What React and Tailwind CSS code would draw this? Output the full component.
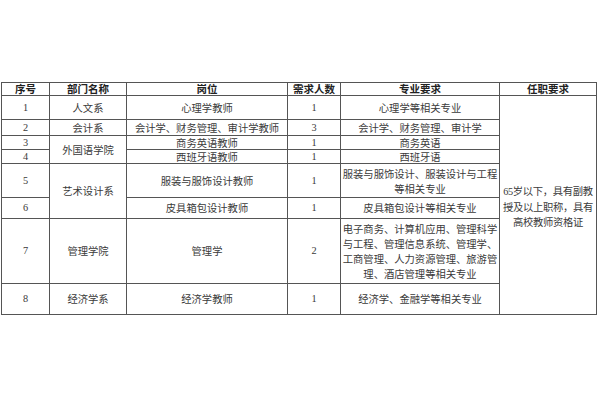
import React from "react";

const F = { fontFamily: '"Noto Sans CJK SC", "Noto Sans", sans-serif' };
const N = { fontFamily: '"Liberation Serif", "Noto Sans CJK SC", serif' };

function C({ children, className = "", num = false }) {
  return (
    <div
      className={"bg-white flex items-center justify-center text-center text-[10.3px] leading-[14px] text-[#3a3a3a] whitespace-nowrap " + className}
      style={num ? N : undefined}
    >
      {children}
    </div>
  );
}

function H({ children }) {
  return (
    <div className="bg-white flex items-center justify-center text-[10.5px] leading-[12px] font-bold text-[#222] whitespace-nowrap">
      {children}
    </div>
  );
}

export default function App() {
  return (
    <div className="w-[600px] h-[400px] bg-white relative" style={F}>
      <div className="pt-[82px] pl-[1px]">
        <div className="grid gap-px bg-[#555] p-px w-[596px]">
          <div className="grid gap-px grid-cols-[47px_76px_160px_52px_158px_96px] grid-rows-[12px_23px_15px_13px_13px_33px_20px_64px_30px]">
            <H>序号</H>
            <H>部门名称</H>
            <H>岗位</H>
            <H>需求人数</H>
            <H>专业要求</H>
            <H>任职要求</H>

            <C num>1</C>
            <C>人文系</C>
            <C>心理学教师</C>
            <C num>1</C>
            <C>心理学等相关专业</C>
            <div className="row-span-8 bg-white flex items-center justify-center text-center text-[10.3px] leading-[15px] text-[#3a3a3a] whitespace-nowrap tracking-[-0.3px]">
              <div className="pt-[2px]">
                <span style={N}>65</span>岁以下，具有副教<br />
                授及以上职称，具有<br />
                高校教师资格证
              </div>
            </div>

            <C num>2</C>
            <C>会计系</C>
            <C>会计学、财务管理、审计学教师</C>
            <C num>3</C>
            <C>会计学、财务管理、审计学</C>

            <C num>3</C>
            <C className="row-span-2">外国语学院</C>
            <C>商务英语教师</C>
            <C num>1</C>
            <C>商务英语</C>

            <C num>4</C>
            <C>西班牙语教师</C>
            <C num>1</C>
            <C>西班牙语</C>

            <C num>5</C>
            <C className="row-span-2">艺术设计系</C>
            <C>服装与服饰设计教师</C>
            <C num>1</C>
            <C className="leading-[15px]">
              <div>
                服装与服饰设计、服装设计与工程<br />
                等相关专业
              </div>
            </C>

            <C num>6</C>
            <C>皮具箱包设计教师</C>
            <C num>1</C>
            <C>皮具箱包设计等相关专业</C>

            <C num>7</C>
            <C>管理学院</C>
            <C>管理学</C>
            <C num>2</C>
            <C className="leading-[15px]">
              <div>
                电子商务、计算机应用、管理科学<br />
                与工程、管理信息系统、管理学、<br />
                工商管理、人力资源管理、旅游管<br />
                理、酒店管理等相关专业
              </div>
            </C>

            <C num>8</C>
            <C>经济学系</C>
            <C>经济学教师</C>
            <C num>1</C>
            <C>经济学、金融学等相关专业</C>
          </div>
        </div>
      </div>
    </div>
  );
}
